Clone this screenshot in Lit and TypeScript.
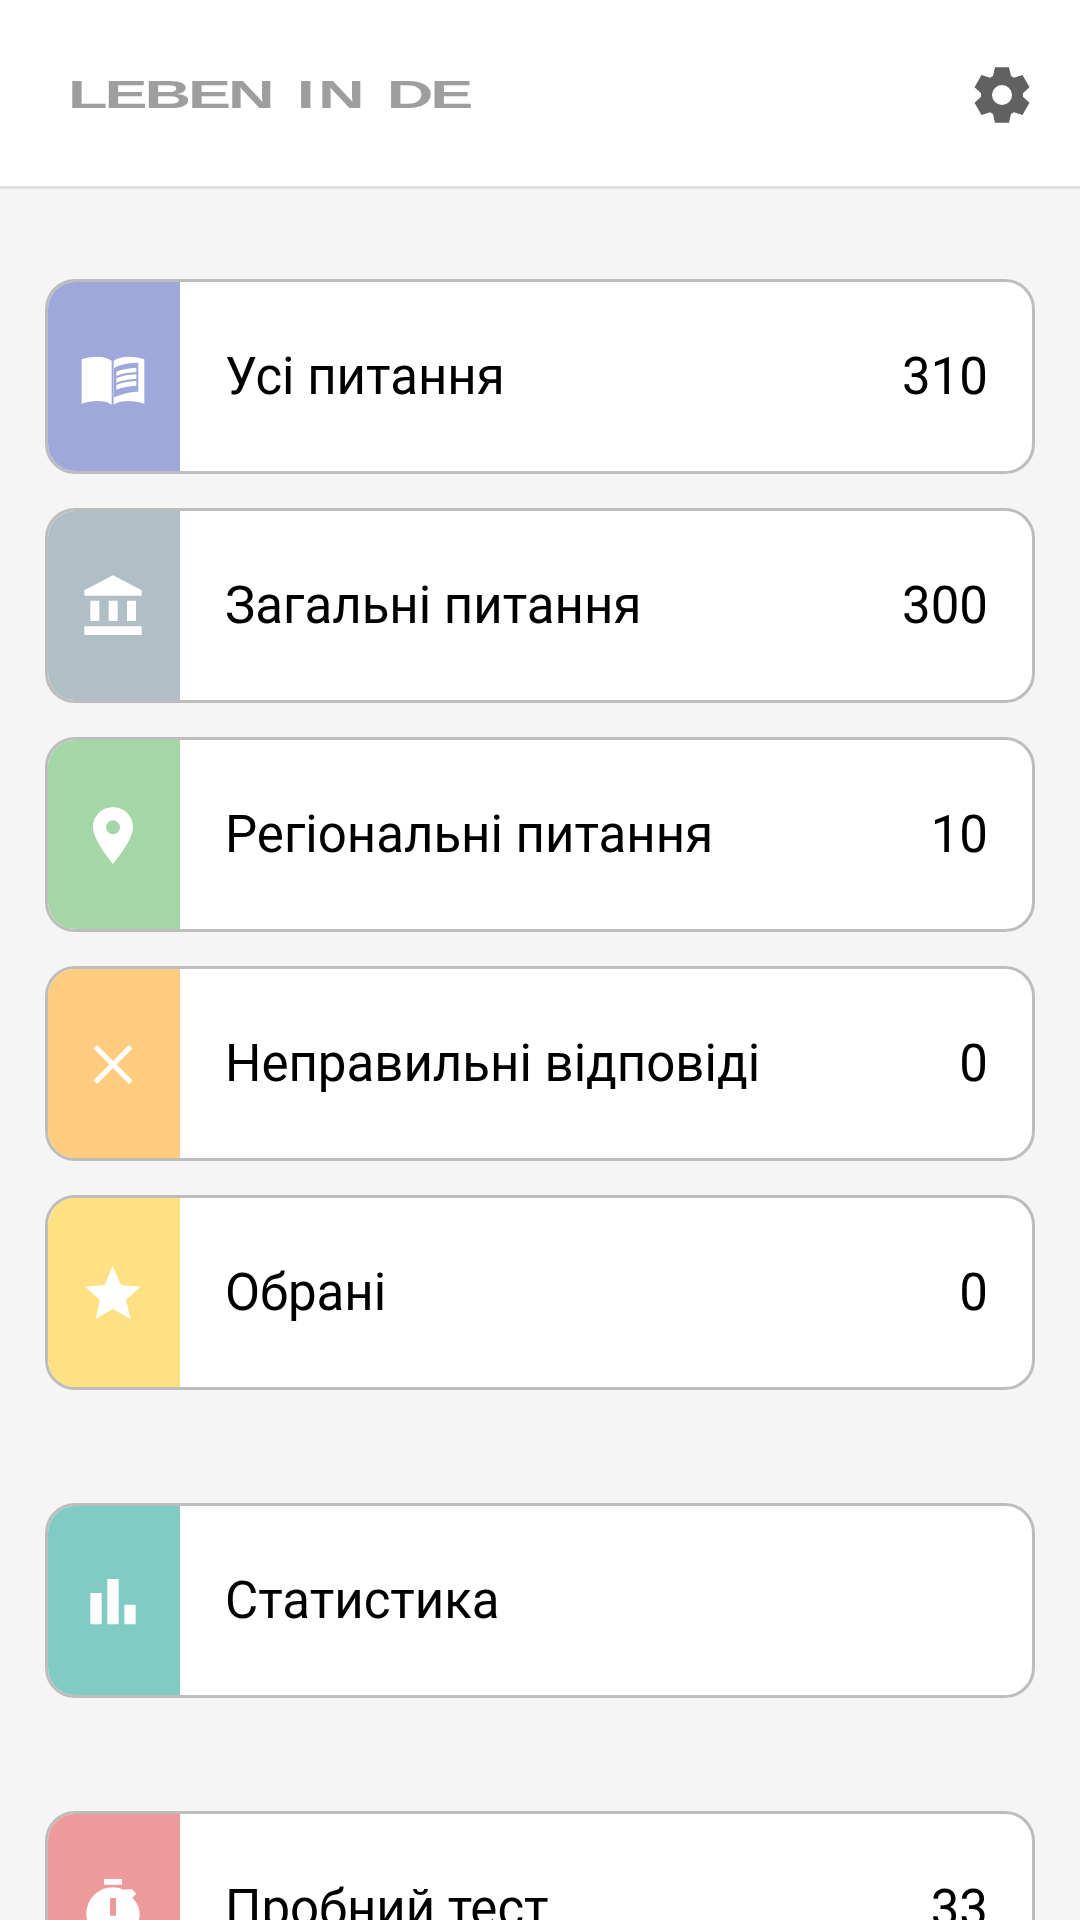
import { LitElement, html, css, svg } from "lit";
import { customElement } from "lit/decorators.js";

const gearPath = (() => {
  const tooth: [number, number][] = [[-9, -19], [-7, -27.7], [7, -27.7], [9, -19]];
  const pts: string[] = [];
  for (let i = 0; i < 6; i++) {
    const a = (i * Math.PI) / 3;
    for (const [x, y] of tooth) {
      pts.push(`${(x * Math.cos(a) - y * Math.sin(a)).toFixed(2)} ${(x * Math.sin(a) + y * Math.cos(a)).toFixed(2)}`);
    }
  }
  return `M${pts.join("L")}Z M10 0A10 10 0 1 0 -10 0A10 10 0 1 0 10 0Z`;
})();

const icons = {
  book: svg`<svg class="ic" viewBox="144 240 216 216"><path fill-rule="evenodd" d="M155 295C185 284 225 284 245 299V431C225 416 185 418 155 428ZM251 299C272 284 312 284 343 295V428C312 418 272 416 251 431ZM250 322C270 310 300 305 325 305V392C300 392 270 400 250 410ZM259 332V345C278 337 298 334 319 333V320C298 321 278 324 259 332ZM259 352V365C278 357 298 354 319 353V340C298 341 278 344 259 352ZM259 372V386C278 378 298 375 319 374V360C298 361 278 364 259 372Z" fill="#fff"/></svg>`,
  bank: svg`<svg class="ic" viewBox="144 208 216 216"><path d="M249 224L335 269V285H163V269ZM181 300H208V361H181ZM236 300H263V361H236ZM291 300H318V361H291ZM163 377H335V403H163Z" fill="#fff"/></svg>`,
  pin: svg`<svg class="ic" viewBox="144 205 216 216"><path fill-rule="evenodd" d="M249 230C215 230 189 256 189 290C189 330 249 400 249 400C249 400 309 330 309 290C309 256 283 230 249 230ZM249 269A21 21 0 1 1 249 311A21 21 0 1 1 249 269Z" fill="#fff"/></svg>`,
  x: svg`<svg class="ic" viewBox="144 202 216 216"><path d="M196 258L302 365M302 258L196 365" stroke="#fff" stroke-width="15" fill="none"/></svg>`,
  star: svg`<svg class="ic" viewBox="144 199 216 216"><path d="M248 226L273 283L332 288L288 328L302 385L248 355L197 385L210 328L165 288L224 283Z" fill="#fff"/></svg>`,
  bars: svg`<svg class="ic" viewBox="144 193 216 216"><path d="M181 277H215V371H181ZM232 235H266V371H232ZM283 312H317V371H283Z" fill="#fff"/></svg>`,
  timer: svg`<svg class="ic" viewBox="144 277 216 216"><path fill-rule="evenodd" d="M222 295H276V312H222ZM249 320C259 320 270 322 279 327L305 325L319 339L307 351C321 365 329 382 329 400C329 444 293 480 249 480C205 480 169 444 169 400C169 356 205 320 249 320ZM240 352V405H258V352Z" fill="#fff"/></svg>`,
};

type Row = { icon: keyof typeof icons; color: string; label: string; count?: string };

const groups: Row[][] = [
  [
    { icon: "book", color: "#9fa8da", label: "Усі питання", count: "310" },
    { icon: "bank", color: "#b0bec5", label: "Загальні питання", count: "300" },
    { icon: "pin", color: "#a5d6a7", label: "Регіональні питання", count: "10" },
    { icon: "x", color: "#ffcc80", label: "Неправильні відповіді", count: "0" },
    { icon: "star", color: "#ffe082", label: "Обрані", count: "0" },
  ],
  [{ icon: "bars", color: "#80cbc4", label: "Статистика" }],
  [{ icon: "timer", color: "#ef9a9a", label: "Пробний тест", count: "33" }],
];

@customElement("app-root")
export class AppRoot extends LitElement {
  static styles = css`
    :host {
      display: block;
      width: 1080px;
      height: 1920px;
      overflow: hidden;
      background: #f5f5f5;
      font-family: Roboto, "Noto Sans", sans-serif;
    }
    header {
      height: 186px;
      box-sizing: border-box;
      background: #fff;
      display: flex;
      align-items: center;
      justify-content: space-between;
      padding: 4px 49px 0 68px;
    }
    .rule {
      height: 3px;
      background: #e0e0e0;
    }
    .logo {
      font: bold 38px "Liberation Sans", Arial, sans-serif;
      color: #9e9e9e;
      white-space: nowrap;
      transform-origin: left center;
      transform: scaleX(1.7);
      letter-spacing: -1.8px;
      word-spacing: 6px;
      line-height: 1;
    }
    .logo .i {
      letter-spacing: 2px;
    }
    .gear {
      width: 58px;
      height: 58px;
      display: block;
    }
    main {
      padding: 90px 45px 0;
      display: flex;
      flex-direction: column;
      gap: 113px;
    }
    .group {
      display: flex;
      flex-direction: column;
      gap: 34px;
    }
    .card {
      height: 195px;
      box-sizing: border-box;
      border: 3px solid #bdbdbd;
      border-radius: 30px;
      background: #fff;
      overflow: hidden;
      display: flex;
      align-items: stretch;
      flex: none;
    }
    .tile {
      width: 132px;
      flex: none;
      display: flex;
      align-items: center;
      justify-content: center;
    }
    .ic {
      width: 72px;
      height: 72px;
      display: block;
    }
    .body {
      flex: 1;
      display: flex;
      align-items: center;
      justify-content: space-between;
      padding: 0 44px 0 45px;
      font-size: 51px;
      color: #000;
    }
  `;

  render() {
    return html`
      <header>
        <div class="logo">LEBEN <span class="i">I</span>N DE</div>
        <svg class="gear" viewBox="-29 -29 58 58"><path fill="#616161" fill-rule="evenodd" d=${gearPath}></path></svg>
      </header>
      <div class="rule"></div>
      <main>
        ${groups.map(
          (g) => html`<div class="group">
            ${g.map(
              (r) => html`<div class="card">
                <div class="tile" style="background:${r.color}">${icons[r.icon]}</div>
                <div class="body"><span>${r.label}</span><span>${r.count ?? ""}</span></div>
              </div>`
            )}
          </div>`
        )}
      </main>
    `;
  }
}
